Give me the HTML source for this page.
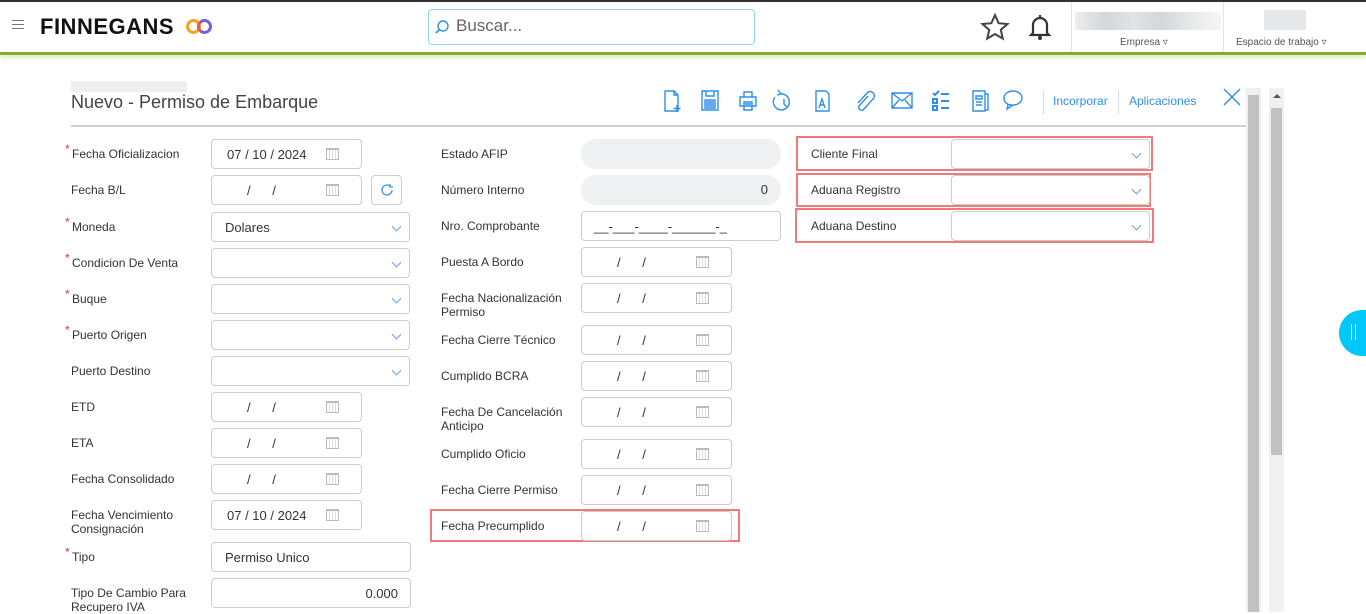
<!DOCTYPE html>
<html><head><meta charset="utf-8"><style>
*{box-sizing:border-box;margin:0;padding:0}
body{width:1366px;height:612px;overflow:hidden;background:#fff;font-family:"Liberation Sans",sans-serif;color:#333;position:relative}
.a{position:absolute}
.lbl{position:absolute;font-size:12px;color:#333;line-height:14px}
.req:before{content:"*";position:absolute;left:-7px;top:-5px;color:#e33;font-size:12px}
.in{position:absolute;border:1px solid #ccc;border-radius:4px;background:#fff;height:30px;font-size:13px;color:#333}
.dt{width:151px}
.sl{width:199px}
.cal{position:absolute;right:22px;top:8px;width:13px;height:12px;border:1px solid #bbb;border-top-width:2px;background:repeating-linear-gradient(90deg,#fff 0 2px,#ddd 2px 3px)}
.sl:after{content:"";position:absolute;right:9px;top:10px;width:6px;height:6px;border-right:1.5px solid #6a9ee0;border-bottom:1.5px solid #6a9ee0;transform:rotate(45deg)}
.txt{position:absolute;top:7px;font-size:13px}
.red{position:absolute;border:2px solid #f07a7a}
</style></head><body>
<div class="a" style="left:0;top:0;width:1366px;height:2px;background:#333"></div>
<div class="a" style="left:0;top:52px;width:1366px;height:3px;background:#85ac25;box-shadow:0 2px 4px rgba(120,160,40,.35)"></div>
<div class="a" style="left:12px;top:20px;width:12px;height:1px;background:#777;box-shadow:0 4px 0 #777,0 8px 0 #777"></div>
<div class="a" style="left:40px;top:14px;font-size:22px;font-weight:bold;color:#111;letter-spacing:.5px">FINNEGANS</div>
<div class="a" style="left:186px;top:19px;width:15px;height:15px;border:3.5px solid #f7a21b;border-radius:50%"></div>
<div class="a" style="left:197px;top:19px;width:15px;height:15px;border:3.5px solid #7a5fd0;border-radius:50%;border-left-color:#e55"></div>
<div class="a" style="left:428px;top:9px;width:327px;height:36px;border:1px solid #88dcf2;border-radius:4px"></div>
<svg class="a" style="left:434px;top:19px" width="16" height="16"><circle cx="9" cy="7" r="5" fill="none" stroke="#2a8fe0" stroke-width="1.4"/><path d="M5.5 10.5L2 14" stroke="#2a8fe0" stroke-width="1.6"/></svg>
<div class="a" style="left:456px;top:16px;font-size:17px;color:#666">Buscar...</div>
<svg class="a" style="left:980px;top:13px" width="30" height="28"><path d="M15 2l3.6 8.2 8.9.8-6.7 5.9 2 8.7L15 21l-7.8 4.6 2-8.7L2.5 11l8.9-.8z" fill="none" stroke="#444" stroke-width="2"/></svg>
<svg class="a" style="left:1028px;top:13px" width="24" height="30"><path d="M5 20V12a7 7 0 0114 0v8l2 2H3z" fill="none" stroke="#333" stroke-width="2.2"/><rect x="11" y="2" width="2" height="3" fill="#333"/><circle cx="12" cy="25" r="2" fill="#333"/></svg>
<div class="a" style="left:1071px;top:2px;width:1px;height:50px;background:#e4e4e4"></div>
<div class="a" style="left:1223px;top:2px;width:1px;height:50px;background:#e4e4e4"></div>
<div class="a" style="left:1075px;top:12px;width:146px;height:18px;background:linear-gradient(90deg,#eee,#d4d6da,#e2e3e6,#d4d6da,#e8e9eb,#f6f6f6)"></div>
<div class="a" style="left:1264px;top:10px;width:42px;height:20px;background:#e6e7ea"></div>
<div class="a" style="left:1120px;top:37px;font-size:10px;color:#555">Empresa ▿</div>
<div class="a" style="left:1236px;top:37px;font-size:10px;color:#555">Espacio de trabajo ▿</div>

<div class="a" style="left:71px;top:81px;width:116px;height:11px;background:#eee"></div>
<div class="a" style="left:71px;top:92px;font-size:18px;color:#444">Nuevo - Permiso de Embarque</div>
<div class="a" style="left:71px;top:125px;width:1175px;height:2px;background:#cfd0d4"></div>

<svg class="a" style="left:660px;top:88px" width="380" height="26" fill="none" stroke="#2f8fe8" stroke-width="1.4">
<path d="M5 3h9l4 4v16H5z M14 3v4h4 M17 17v7 M13.5 20.5h7"/>
<path d="M42 3h16v19H42z M46 3v5h8V3 M45 12h10v8H45z M46 14h8M46 16h8M46 18h8"/>
<path d="M80 9h16v9H80z M84 9V4h8v5 M84 14h8v8h-8z M85 16h6M85 18h6"/>
<path d="M120 6a8 8 0 11-5 3 M118 2l3 4-4 1 M124 11v5l3 3"/>
<path d="M156 3h10l3 3v17h-13z M159 20l3-9 3 9 M160 17h4"/>
<path d="M208 8l-9 10a3 3 0 004 4l11-12a4.5 4.5 0 00-6-6l-10 11"/>
<path d="M232 5h20v15h-20z M232 5l10 8 10-8 M232 20l7-8 M252 20l-7-8"/>
<path d="M273 5l2 2 4-4 M273 11h4v4h-4z M273 18h4v4h-4z M281 6h8M281 13h8M281 20h8" stroke-width="2"/>
<path d="M313 3h12v20h-12z M325 6h3v16h-3 M316 8h6v3h-6z M316 14h6M316 17h6"/>
<path d="M352 17c-6 0-8-4-8-7 0-4 4-7 9-7s9 3 9 7-4 7-9 7l-6 4 1-4"/>
</svg>
<div class="a" style="left:1043px;top:90px;width:1px;height:24px;background:#ddd"></div>
<div class="a" style="left:1053px;top:94px;font-size:12px;color:#2f8fe8">Incorporar</div>
<div class="a" style="left:1118px;top:90px;width:1px;height:24px;background:#ddd"></div>
<div class="a" style="left:1129px;top:94px;font-size:12px;color:#2f8fe8">Aplicaciones</div>
<svg class="a" style="left:1223px;top:88px" width="18" height="18"><path d="M1 1l16 16M17 1L1 17" stroke="#2f8fe8" stroke-width="1.4"/></svg>

<div class="a" style="left:1246px;top:88px;width:15px;height:524px;background:#f0f0f0"></div>
<div class="a" style="left:1248px;top:95px;width:11px;height:517px;background:#c1c1c1"></div>
<div class="a" style="left:1269px;top:88px;width:15px;height:524px;background:#f0f0f0"></div>
<div class="a" style="left:1271px;top:108px;width:11px;height:347px;background:#c1c1c1"></div>
<div class="a" style="left:1273px;top:94px;border:4px solid transparent;border-bottom-color:#555;border-top:0"></div>
<div class="a" style="left:1339px;top:310px;width:54px;height:46px;border-radius:23px;background:#00c8f8"></div>
<div class="a" style="left:1351px;top:324px;width:5px;height:16px;border-left:1px solid #fff;border-right:1px solid #fff"></div>

<!-- left column -->
<div class="lbl req" style="left:72px;top:147px">Fecha Oficializacion</div>
<div class="in dt" style="left:211px;top:139px"><span class="txt" style="left:15px">07 / 10 / 2024</span><i class="cal"></i></div>
<div class="lbl" style="left:71px;top:183px">Fecha B/L</div>
<div class="in dt" style="left:211px;top:175px"><span class="txt" style="left:35px">/&nbsp;&nbsp;&nbsp;&nbsp;&nbsp;&nbsp;/</span><i class="cal"></i></div>
<div class="in" style="left:371px;top:175px;width:31px"><svg class="a" style="left:7px;top:6px" width="16" height="16"><path d="M13 8a5 5 0 11-2-4 M11 2v3h3" fill="none" stroke="#3a95e8" stroke-width="1.3"/></svg></div>
<div class="lbl req" style="left:72px;top:220px">Moneda</div>
<div class="in sl" style="left:211px;top:212px"><span class="txt" style="left:13px">Dolares</span></div>
<div class="lbl req" style="left:72px;top:256px">Condicion De Venta</div>
<div class="in sl" style="left:211px;top:248px"></div>
<div class="lbl req" style="left:72px;top:292px">Buque</div>
<div class="in sl" style="left:211px;top:284px"></div>
<div class="lbl req" style="left:72px;top:328px">Puerto Origen</div>
<div class="in sl" style="left:211px;top:320px"></div>
<div class="lbl" style="left:71px;top:364px">Puerto Destino</div>
<div class="in sl" style="left:211px;top:356px"></div>
<div class="lbl" style="left:71px;top:400px">ETD</div>
<div class="in dt" style="left:211px;top:392px"><span class="txt" style="left:35px">/&nbsp;&nbsp;&nbsp;&nbsp;&nbsp;&nbsp;/</span><i class="cal"></i></div>
<div class="lbl" style="left:71px;top:436px">ETA</div>
<div class="in dt" style="left:211px;top:428px"><span class="txt" style="left:35px">/&nbsp;&nbsp;&nbsp;&nbsp;&nbsp;&nbsp;/</span><i class="cal"></i></div>
<div class="lbl" style="left:71px;top:472px">Fecha Consolidado</div>
<div class="in dt" style="left:211px;top:464px"><span class="txt" style="left:35px">/&nbsp;&nbsp;&nbsp;&nbsp;&nbsp;&nbsp;/</span><i class="cal"></i></div>
<div class="lbl" style="left:71px;top:508px">Fecha Vencimiento<br>Consignación</div>
<div class="in dt" style="left:211px;top:500px"><span class="txt" style="left:15px">07 / 10 / 2024</span><i class="cal"></i></div>
<div class="lbl req" style="left:72px;top:550px">Tipo</div>
<div class="in" style="left:211px;top:542px;width:200px"><span class="txt" style="left:13px">Permiso Unico</span></div>
<div class="lbl" style="left:71px;top:586px">Tipo De Cambio Para<br>Recupero IVA</div>
<div class="in" style="left:211px;top:578px;width:200px"><span class="txt" style="right:12px">0.000</span></div>

<!-- middle -->
<div class="lbl" style="left:441px;top:147px">Estado AFIP</div>
<div class="a" style="left:581px;top:139px;width:200px;height:30px;border-radius:15px;background:#eff0f2"></div>
<div class="lbl" style="left:441px;top:183px">Número Interno</div>
<div class="a" style="left:581px;top:175px;width:200px;height:30px;border-radius:15px;background:#eff0f2;font-size:13px"><span class="txt" style="right:13px">0</span></div>
<div class="lbl" style="left:441px;top:219px">Nro. Comprobante</div>
<div class="in" style="left:581px;top:211px;width:200px"><span class="txt" style="left:12px">__-___-____-______-_</span></div>
<div class="lbl" style="left:441px;top:255px">Puesta A Bordo</div>
<div class="in dt" style="left:581px;top:247px"><span class="txt" style="left:35px">/&nbsp;&nbsp;&nbsp;&nbsp;&nbsp;&nbsp;/</span><i class="cal"></i></div>
<div class="lbl" style="left:441px;top:291px">Fecha Nacionalización<br>Permiso</div>
<div class="in dt" style="left:581px;top:283px"><span class="txt" style="left:35px">/&nbsp;&nbsp;&nbsp;&nbsp;&nbsp;&nbsp;/</span><i class="cal"></i></div>
<div class="lbl" style="left:441px;top:333px">Fecha Cierre Técnico</div>
<div class="in dt" style="left:581px;top:325px"><span class="txt" style="left:35px">/&nbsp;&nbsp;&nbsp;&nbsp;&nbsp;&nbsp;/</span><i class="cal"></i></div>
<div class="lbl" style="left:441px;top:369px">Cumplido BCRA</div>
<div class="in dt" style="left:581px;top:361px"><span class="txt" style="left:35px">/&nbsp;&nbsp;&nbsp;&nbsp;&nbsp;&nbsp;/</span><i class="cal"></i></div>
<div class="lbl" style="left:441px;top:405px">Fecha De Cancelación<br>Anticipo</div>
<div class="in dt" style="left:581px;top:397px"><span class="txt" style="left:35px">/&nbsp;&nbsp;&nbsp;&nbsp;&nbsp;&nbsp;/</span><i class="cal"></i></div>
<div class="lbl" style="left:441px;top:447px">Cumplido Oficio</div>
<div class="in dt" style="left:581px;top:439px"><span class="txt" style="left:35px">/&nbsp;&nbsp;&nbsp;&nbsp;&nbsp;&nbsp;/</span><i class="cal"></i></div>
<div class="lbl" style="left:441px;top:483px">Fecha Cierre Permiso</div>
<div class="in dt" style="left:581px;top:475px"><span class="txt" style="left:35px">/&nbsp;&nbsp;&nbsp;&nbsp;&nbsp;&nbsp;/</span><i class="cal"></i></div>
<div class="red" style="left:430px;top:509px;width:310px;height:33px"></div>
<div class="lbl" style="left:441px;top:519px">Fecha Precumplido</div>
<div class="in dt" style="left:581px;top:511px"><span class="txt" style="left:35px">/&nbsp;&nbsp;&nbsp;&nbsp;&nbsp;&nbsp;/</span><i class="cal"></i></div>

<!-- right -->
<div class="red" style="left:796px;top:136px;width:357px;height:35px"></div>
<div class="lbl" style="left:811px;top:147px">Cliente Final</div>
<div class="in sl" style="left:951px;top:139px"></div>
<div class="red" style="left:796px;top:173px;width:355px;height:34px"></div>
<div class="lbl" style="left:811px;top:183px">Aduana Registro</div>
<div class="in sl" style="left:951px;top:175px"></div>
<div class="red" style="left:795px;top:208px;width:359px;height:35px"></div>
<div class="lbl" style="left:811px;top:219px">Aduana Destino</div>
<div class="in sl" style="left:951px;top:211px"></div>
</body></html>
